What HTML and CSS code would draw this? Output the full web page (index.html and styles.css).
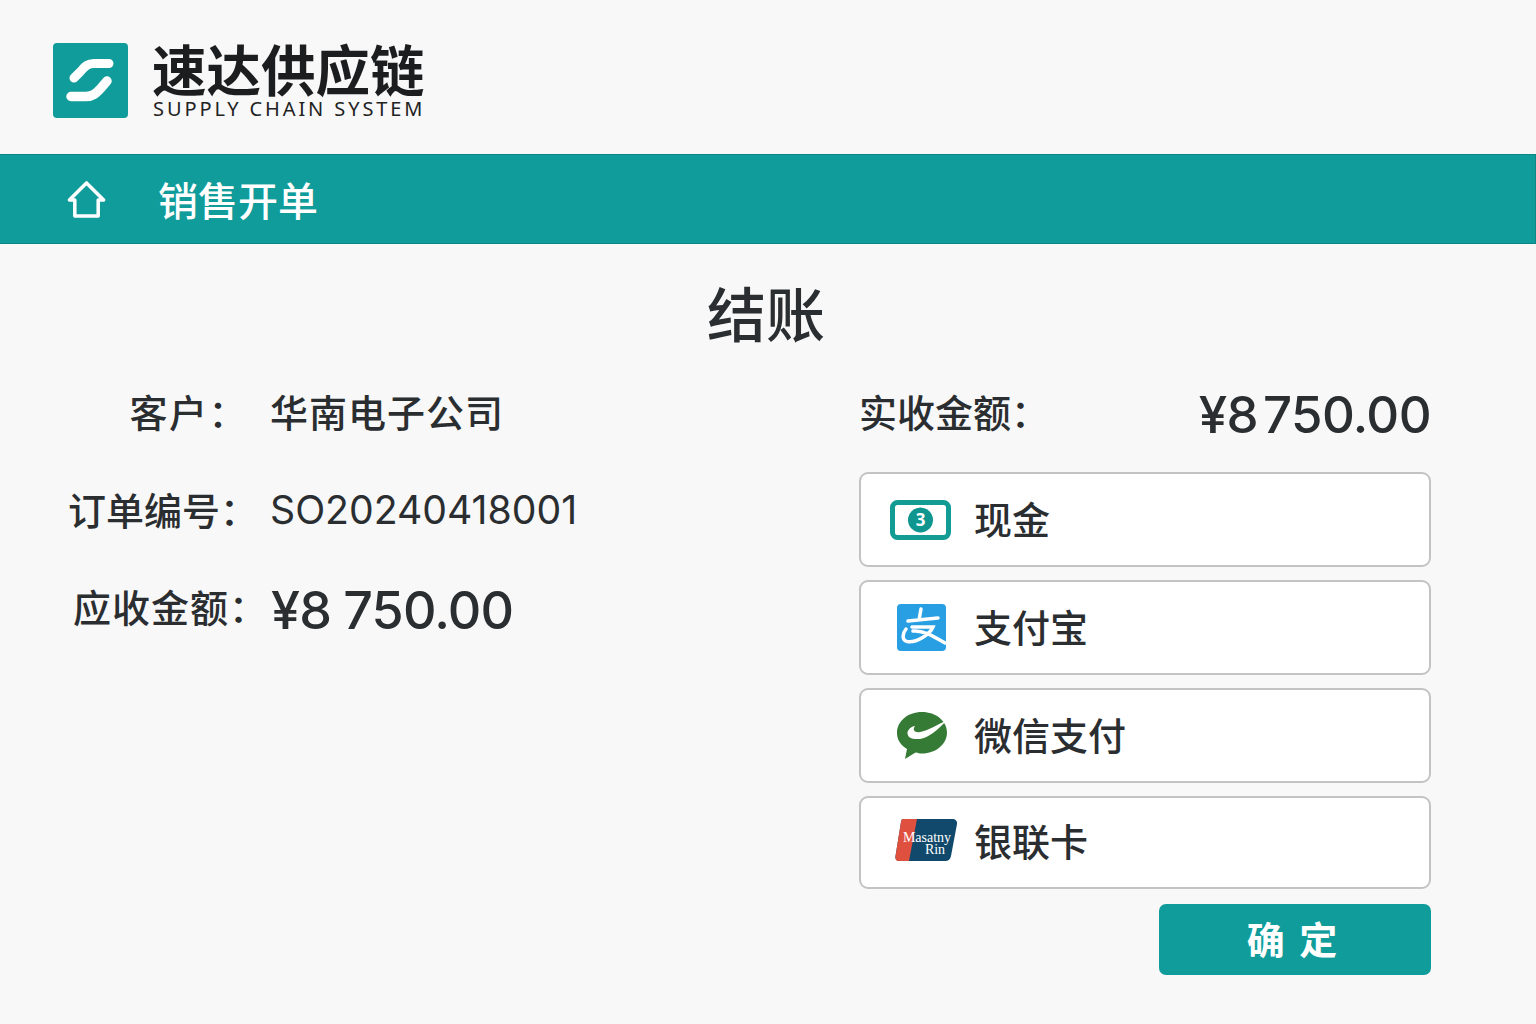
FILE: index.html
```html
<!DOCTYPE html>
<html lang="zh-CN">
<head>
<meta charset="utf-8">
<title>结账</title>
<link rel="stylesheet" href="styles.css">
</head>
<body>
<header class="brand">
  <svg class="logo" viewBox="0 0 75 75" aria-hidden="true">
    <rect width="75" height="75" rx="4" fill="#109c9a"/>
    <path d="M56 20.500H41C33 20.500 31 25 27 29L21 35" fill="none" stroke="#fff" stroke-width="9" stroke-linecap="round"/>
    <path d="M18 53.500H33C41 53.500 44 49 48 45L54 38" fill="none" stroke="#fff" stroke-width="9.500" stroke-linecap="round"/>
  </svg>
  <div class="brand-text">
    <div class="brand-name">速达供应链</div>
    <div class="brand-sub">SUPPLY CHAIN SYSTEM</div>
  </div>
</header>
<nav class="bar">
  <svg class="home" viewBox="0 0 40 40" aria-hidden="true">
    <path d="M2.500 20.500L20 3L37.500 20.500H32V37H8V20.500Z" fill="none" stroke="#fff" stroke-width="3.600" stroke-linejoin="round"/>
  </svg>
  <span class="bar-title">销售开单</span>
</nav>
<main class="content">
  <h1 class="title">结账</h1>
  <div class="columns">
    <section class="info">
      <div class="info-row row-a"><span class="label">客户：</span><span class="value">华南电子公司</span></div>
      <div class="info-row row-b"><span class="label">订单编号：</span><span class="value">SO20240418001</span></div>
      <div class="info-row row-c"><span class="label">应收金额：</span><span class="amount amount-l">¥8 750.00</span></div>
    </section>
    <section class="pay">
      <div class="received"><span class="label">实收金额：</span><span class="amount amount-r">¥8 750.00</span></div>
      <div class="methods">
        <button class="method">
          <span class="icon-slot">
            <svg class="ic-cash" viewBox="0 0 61 40" aria-hidden="true">
              <rect x="2.500" y="2.500" width="56" height="35" rx="5" fill="#fff" stroke="#129c94" stroke-width="5"/>
              <circle cx="30.500" cy="20" r="12.500" fill="#0e968f"/>
              <text x="30.500" y="26" class="cash-num">3</text>
            </svg>
          </span>
          <span class="method-label">现金</span>
        </button>
        <button class="method">
          <span class="icon-slot">
            <svg class="ic-ali" viewBox="0 0 49 47" aria-hidden="true">
              <rect width="49" height="47" rx="4" fill="#279fe2"/>
              <path d="M11 17L41 14M24 5L22 16" fill="none" stroke="#fff" stroke-width="3.500" stroke-linecap="round"/>
              <path d="M15 23H36C33 30 20 39 10 37.500C5 36.500 5 30 9 25M16 27C26 26 36 32 48 39" fill="none" stroke="#fff" stroke-width="3.500" stroke-linecap="round"/>
            </svg>
          </span>
          <span class="method-label">支付宝</span>
        </button>
        <button class="method">
          <span class="icon-slot">
            <svg class="ic-wechat" viewBox="0 0 52 49" aria-hidden="true">
              <path d="M26 1C11.500 1 1 10.500 1 22C1 29 5 34.500 11 38L9 48L19.500 41.500C22 42 24 42.500 26 42.500C40 42.500 51 33 51 21.500C51 10 40 1 26 1Z" fill="#357a35"/>
              <path d="M11.500 21C13 17 17 15 19 15C16 19 19 22 24 21C32 20 42 13 50 10C43 18 32 27 24 28C16 28.500 11 27 11.500 21Z" fill="#fff"/>
            </svg>
          </span>
          <span class="method-label">微信支付</span>
        </button>
        <button class="method method-last">
          <span class="icon-slot">
            <svg class="ic-union" viewBox="0 0 63 44" aria-hidden="true">
              <path d="M8 1H57C60.500 1 62.500 3 62 6L56 38C55.500 41 53.500 43 50 43H4C1.500 43 0 41 .5 38L6 4C6.300 2 7 1 8 1Z" fill="#10496b"/>
              <path d="M8 1H22L14 43H4C1.500 43 0 41 .5 38L6 4C6.300 2 7 1 8 1Z" fill="#e0503e"/>
              <text x="32" y="24" class="union-t">Masatny</text>
              <text x="40" y="36" class="union-t">Rin</text>
            </svg>
          </span>
          <span class="method-label">银联卡</span>
        </button>
      </div>
      <div class="actions"><button class="confirm">确 定</button></div>
    </section>
  </div>
</main>
</body>
</html>
```
FILE: styles.css
```css
* { box-sizing: border-box; }
html, body { margin: 0; height: 1024px; overflow: hidden; }
body {
  background: #f8f8f8;
  color: #2b2e31;
  font-family: "Noto Sans CJK SC", "Noto Sans", sans-serif;
}
.brand {
  height: 154px;
  display: flex;
  align-items: center;
  gap: 25px;
  padding: 6px 0 0 53px;
}
.logo { width: 75px; height: 75px; flex: none; }
.brand-text { display: flex; flex-direction: column; margin-left: -1px; }
.brand-name {
  font-size: 54.500px;
  line-height: 53px;
  font-weight: 700;
  color: #1c1d1f;
}
.brand-sub {
  font-family: "Noto Sans", sans-serif;
  font-size: 20px;
  line-height: 20px;
  margin-top: 5px;
  margin-left: 1px;
  letter-spacing: 2.900px;
  color: #222;
  white-space: nowrap;
}
.bar {
  height: 90px;
  background: #109c9a;
  border-top: 1px solid #0c8785;
  border-bottom: 1px solid #0c8785;
  border-right: 1px solid #0c8785;
  display: flex;
  align-items: center;
  padding-left: 67px;
  gap: 52px;
  color: #fff;
}
.home { width: 39px; height: 39px; flex: none; }
.bar-title { font-size: 40px; line-height: 1; font-weight: 500; }
.content { padding: 0 105px 0 0; }
.title {
  margin: 33px 0 0;
  padding-left: 101px;
  text-align: center;
  font-size: 59px;
  line-height: 70px;
  font-weight: 500;
  color: #2b2e31;
}
.columns {
  display: grid;
  grid-template-columns: 859px 572px;
  margin-top: 39px;
}
.info { display: flex; flex-direction: column; }
.info-row { display: flex; align-items: center; height: 50px; margin-bottom: 48px; }
.label { font-size: 38px; line-height: 50px; white-space: nowrap; font-weight: 500; }
.info-row .label { width: 271px; text-align: right; padding-right: 22px; }
.row-a .label { padding-right: 23px; letter-spacing: 1.500px; }
.row-b .label { padding-right: 13px; }
.row-c { margin-top: 2px; }
.row-c .label { padding-right: 3px; padding-bottom: 6px; letter-spacing: 1px; }
.value { font-size: 38px; line-height: 50px; letter-spacing: 1px; white-space: nowrap; font-weight: 500; margin-left: -1px; }
.row-b .value { font-family: "Inter", sans-serif; font-size: 39.200px; letter-spacing: 0; font-weight: 400; margin-top: 2px; }
.amount {
  font-family: "Inter", sans-serif;
  font-size: 52px;
  line-height: 50px;
  font-weight: 500;
  white-space: nowrap;
}
.amount-l { font-weight: 550; letter-spacing: -0.800px; word-spacing: -1px; margin-top: 4px; }
.amount-r { font-size: 51px; font-weight: 500; letter-spacing: -0.600px; word-spacing: -8px; margin-top: 8px; }
.received { display: flex; justify-content: space-between; align-items: center; height: 50px; }
.methods { display: flex; flex-direction: column; gap: 13px; margin-top: 36px; }
.method {
  display: flex;
  align-items: center;
  height: 95px;
  padding: 0;
  background: #fff;
  border: 2px solid #c3c3c3;
  border-radius: 9px;
  font-family: inherit;
  font-size: 38px;
  font-weight: 500;
  color: #2b2e31;
  text-align: left;
}
.method-last { height: 93px; }
.method-label { margin-left: -1px; padding-bottom: 4px; }
.method-last .method-label { padding-bottom: 6px; }
.icon-slot { width: 114px; padding-left: 29px; display: flex; align-items: center; justify-content: flex-start; flex: none; }
.ic-cash { width: 61px; height: 40px; }
.ic-ali { width: 49px; height: 47px; margin-left: 7px; }
.ic-wechat { width: 52px; height: 49px; margin-left: 6px; }
.ic-union { width: 63px; height: 44px; margin-left: 5px; margin-top: -6px; }
.cash-num {
  font-family: "Noto Sans", sans-serif;
  font-size: 17px;
  font-weight: 700;
  fill: #fff;
  text-anchor: middle;
}
.union-t {
  font-family: "Liberation Serif", serif;
  font-size: 14px;
  fill: #fff;
  text-anchor: middle;
}
.actions { display: flex; justify-content: flex-end; margin-top: 15px; }
.confirm {
  width: 272px;
  height: 71px;
  border: 0;
  border-radius: 7px;
  padding: 0 6px 4px 0;
  background: #109c9a;
  color: #fff;
  font-family: inherit;
  font-size: 38px;
  font-weight: 700;
  word-spacing: 6px;
}
```
